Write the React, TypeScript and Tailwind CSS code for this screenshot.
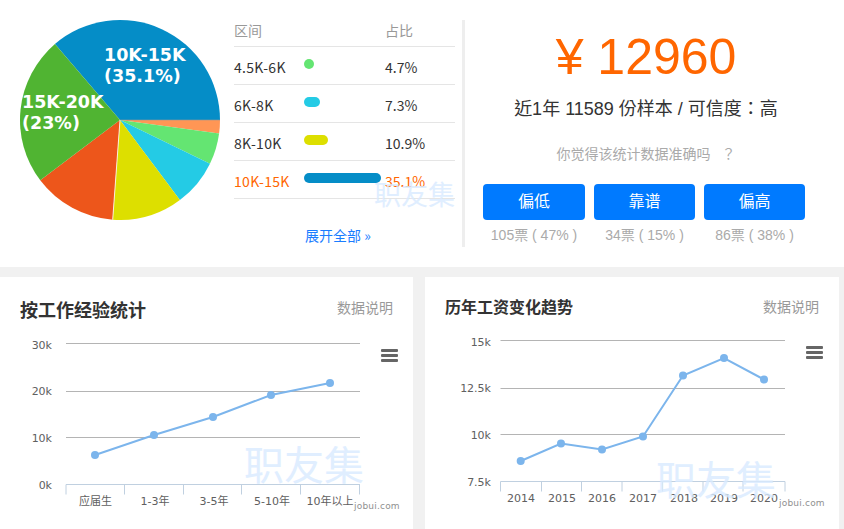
const pieSlices = [
  { from: 229.4, to: 360, color: '#058dc7' },
  { from: 0, to: 7.7, color: '#ff9655' },
  { from: 7.7, to: 25.9, color: '#64e572' },
  { from: 25.9, to: 53.2, color: '#24cbe5' },
  { from: 53.2, to: 94.2, color: '#dddf00' },
  { from: 94.2, to: 142.9, color: '#ed561b' },
  { from: 142.9, to: 229.4, color: '#50b432' },
]

const rows = [
  { range: '4.5K-6K', bar: 'w-[10px] bg-[#64e572]', pct: '4.7%' },
  { range: '6K-8K', bar: 'w-[16px] bg-[#24cbe5]', pct: '7.3%' },
  { range: '8K-10K', bar: 'w-[24px] bg-[#dddf00]', pct: '10.9%' },
  { range: '10K-15K', bar: 'w-[77px] bg-[#058dc7]', pct: '35.1%', active: true },
]

const votes = [
  { label: '偏低', count: '105票 ( 47% )', width: 'w-[102px]' },
  { label: '靠谱', count: '34票 ( 15% )', width: 'w-[101px]' },
  { label: '偏高', count: '86票 ( 38% )', width: 'w-[101px]' },
]

function slicePath(from: number, to: number) {
  const cx = 120
  const cy = 120
  const r = 100
  const a = (from * Math.PI) / 180
  const b = (to * Math.PI) / 180
  const large = to - from > 180 ? 1 : 0
  return `M${cx} ${cy}L${cx + r * Math.cos(a)} ${cy + r * Math.sin(a)}A${r} ${r} 0 ${large} 1 ${cx + r * Math.cos(b)} ${cy + r * Math.sin(b)}Z`
}

function Pie() {
  return (
    <svg width="234" height="240" viewBox="0 0 234 240" className="block shrink-0">
      {pieSlices.map((s) => (
        <path key={s.color} d={slicePath(s.from, s.to)} fill={s.color} />
      ))}
      <line x1="120" y1="120" x2="112.7" y2="219.7" stroke="#ffffff" strokeWidth="0.8" />
      <line x1="120" y1="120" x2="220" y2="120" stroke="#999999" strokeWidth="0.6" />
      <g fill="#ffffff" fontFamily="'DejaVu Sans', sans-serif" fontWeight="700" fontSize="17.5">
        <text x="104" y="61">10K-15K</text>
        <text x="104" y="82">(35.1%)</text>
        <text x="22" y="108">15K-20K</text>
        <text x="22" y="129">(23%)</text>
      </g>
    </svg>
  )
}

function Watermark({ className }: { className: string }) {
  return (
    <span className={`absolute whitespace-nowrap leading-none text-[#d9ebff] opacity-80 pointer-events-none ${className}`}>
      职友集
    </span>
  )
}

function MenuIcon({ x, y }: { x: number; y: number }) {
  return (
    <g fill="#666666">
      <rect x={x} y={y} width="17" height="3" rx="1" />
      <rect x={x} y={y + 5} width="17" height="3" rx="1" />
      <rect x={x} y={y + 10} width="17" height="3" rx="1" />
    </g>
  )
}

interface LineChartProps {
  left: number
  right: number
  grid: number[]
  axisY: number
  labels: string[]
  ticks: number[]
  points: number[][]
  cats: { x: number; label: string }[]
  labelX: number
  catY: number
}

// y axis text sits on the same baselines in both charts
const labelBaselines = [19, 65, 112, 159]

function LineChart({ left, right, grid, axisY, labels, ticks, points, cats, labelX, catY }: LineChartProps) {
  return (
    <svg width="413" height="210" viewBox="0 0 413 210" className="block" fontFamily="'DejaVu Sans', sans-serif" fontSize="11">
      {grid.map((y) => (
        <line key={y} x1={left} x2={right} y1={y} y2={y} stroke="#b4b4b4" />
      ))}
      <line x1={left} x2={right} y1={axisY} y2={axisY} stroke="#c0d0e0" />
      {ticks.map((t) => (
        <line key={t} x1={t} x2={t} y1={axisY} y2={axisY + 10} stroke="#c0d0e0" />
      ))}
      {labels.map((label, i) => (
        <text key={label} x={labelX} y={labelBaselines[i]} textAnchor="end" fill="#606060">
          {label}
        </text>
      ))}
      {cats.map((c) => (
        <text
          key={c.label}
          x={c.x}
          y={catY}
          textAnchor="middle"
          fill="#606060"
          fontFamily="'DejaVu Sans', 'Noto Sans CJK SC', sans-serif"
        >
          {c.label}
        </text>
      ))}
      <polyline points={points.map((p) => p.join(',')).join(' ')} fill="none" stroke="#7cb5ec" strokeWidth="2" />
      {points.map((p) => (
        <circle key={p[0]} cx={p[0]} cy={p[1]} r="4" fill="#7cb5ec" />
      ))}
      <MenuIcon x={381} y={19} />
      <text x={354} y={179} fill="#909090" fontSize="9" letterSpacing="0.2">
        jobui.com
      </text>
    </svg>
  )
}

export default function App() {
  return (
    <div className="h-[529px] w-[844px] overflow-hidden bg-[#f1f1f1] font-['Noto_Sans_CJK_SC','Noto_Sans',sans-serif]">
      {/* Summary */}
      <div className="flex h-[267px] bg-white">
        <Pie />
        <div className="relative w-[221px] shrink-0 pt-[19px] text-[14px] text-[#333]">
          <div className="flex h-[28px] items-start border-b border-[#e5e5e5] leading-[22px] text-[#999]">
            <span className="w-[151px]">区间</span>
            <span>占比</span>
          </div>
          {rows.map((row) => (
            <div
              key={row.range}
              className={`flex h-[38px] items-center border-b border-[#e5e5e5] ${row.active ? 'text-[#ff6600]' : ''}`}
            >
              <span className="w-[70px] pt-[3px] tracking-[0.3px]">{row.range}</span>
              <span className="w-[81px] pb-[4px]">
                <span className={`block h-[10px] rounded-[5px] ${row.bar}`} />
              </span>
              <span className="pt-[3px]">{row.pct}</span>
            </div>
          ))}
          <div className="mt-[26px] pl-[71px] leading-[20px] text-[#1a7dff]">展开全部 »</div>
          <Watermark className="left-[140px] top-[180px] text-[27px]" />
        </div>
        <div className="ml-[7px] mt-[20px] h-[227px] w-[3px] shrink-0 bg-[#eeeeee]" />
        <div className="flex w-[362px] flex-col items-center font-['Liberation_Sans','Noto_Sans_CJK_TC',sans-serif]">
          <div className="mt-[28px] text-[50px] leading-[58px] text-[#ff6600]">¥ 12960</div>
          <div className="mt-[9px] text-[18px] leading-[28px] text-[#333]">近1年 11589 份样本 / 可信度：高</div>
          <div className="mt-[21px] text-[14px] leading-[20px] text-[#aaa]">
            你觉得该统计数据准确吗<span className="ml-[11px]">？</span>
          </div>
          <div className="mt-[20px] mr-[4px] flex gap-[9px]">
            {votes.map((v) => (
              <div key={v.label} className={`${v.width} flex flex-col items-center`}>
                <button className="h-[36px] w-full rounded-[4px] bg-[#007aff] text-[16px] text-white">{v.label}</button>
                <span className="mt-[5px] whitespace-nowrap text-[14px] leading-[20px] text-[#aaa]">{v.count}</span>
              </div>
            ))}
          </div>
        </div>
      </div>

      {/* Charts */}
      <div className="mt-[10px] flex gap-[12px]">
        <div className="relative h-[252px] w-[413px] bg-white">
          <div className="flex h-[53px] justify-between px-[20px] pt-[20px]">
            <h2 className="text-[18px] font-bold leading-[24px] text-[#333]">按工作经验统计</h2>
            <span className="text-[14px] leading-[20px] text-[#999]">数据说明</span>
          </div>
          <LineChart
            left={66}
            right={360}
            grid={[13.5, 61.5, 107.5]}
            axisY={154.5}
            labels={['30k', '20k', '10k', '0k']}
            ticks={[66, 124.5, 183.5, 241.5, 300.5, 359.5]}
            points={[[95, 125], [154, 105], [213, 87], [271, 65], [330, 53]]}
            cats={[
              { x: 95.5, label: '应届生' },
              { x: 155, label: '1-3年' },
              { x: 214, label: '3-5年' },
              { x: 272, label: '5-10年' },
              { x: 330, label: '10年以上' },
            ]}
            labelX={52}
            catY={175}
          />
          <Watermark className="left-[244px] top-[166px] text-[40px]" />
        </div>
        <div className="relative h-[252px] w-[414px] bg-white">
          <div className="flex h-[50px] justify-between px-[20px] pt-[19px]">
            <h2 className="text-[16px] font-bold leading-[20px] text-[#333]">历年工资变化趋势</h2>
            <span className="text-[14px] leading-[20px] text-[#999]">数据说明</span>
          </div>
          <LineChart
            left={75.5}
            right={360}
            grid={[13.5, 61.5, 107.5]}
            axisY={154.5}
            labels={['15k', '12.5k', '10k', '7.5k']}
            ticks={[75.5, 116.5, 156.5, 197, 237.5, 278, 318, 360]}
            points={[[95.7, 134], [136, 116.5], [177, 122.5], [218, 109.5], [258, 48.5], [299, 31], [339, 52.5]]}
            cats={[
              { x: 96, label: '2014' },
              { x: 137, label: '2015' },
              { x: 177, label: '2016' },
              { x: 218, label: '2017' },
              { x: 259, label: '2018' },
              { x: 299, label: '2019' },
              { x: 339, label: '2020' },
            ]}
            labelX={66}
            catY={175}
          />
          <Watermark className="left-[231px] top-[181px] text-[40px]" />
        </div>
      </div>
    </div>
  )
}
